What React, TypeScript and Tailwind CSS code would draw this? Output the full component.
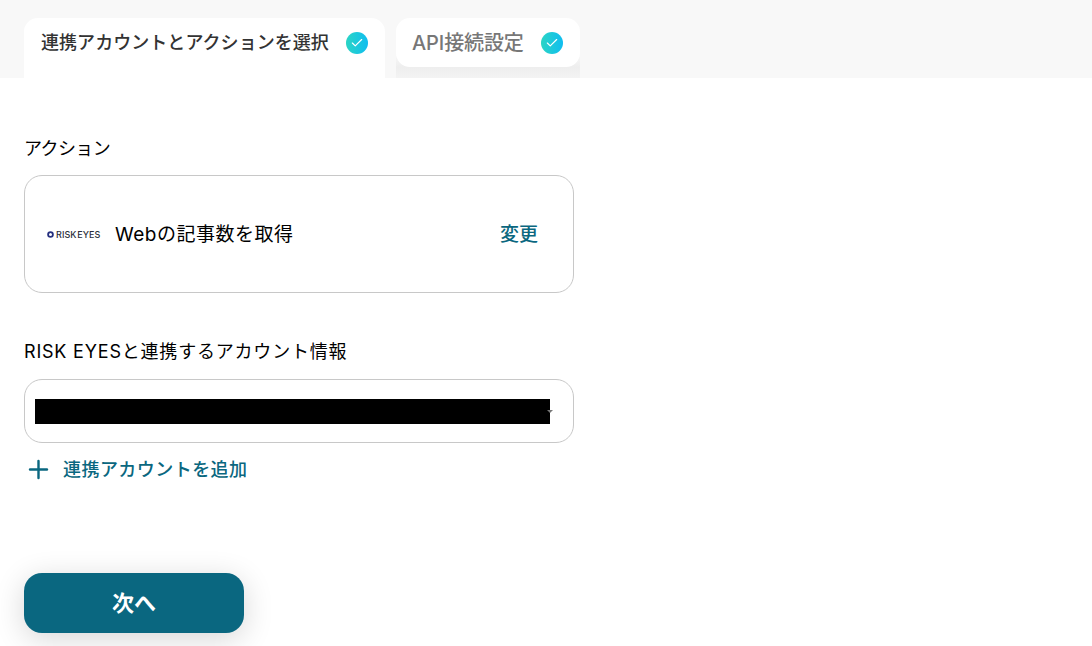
import { Check, Plus } from 'lucide-react'

const FONT = { fontFamily: 'Inter, "Noto Sans CJK JP", sans-serif' }

function CheckBadge() {
  return (
    <span className="flex h-[22px] w-[22px] shrink-0 items-center justify-center rounded-full bg-gradient-to-r from-[#2bd4c4] to-[#10bdf0]">
      <Check size={14} strokeWidth={2} className="text-white" />
    </span>
  )
}

function RiskEyesLogo() {
  return (
    <div className="flex w-[56px] shrink-0 items-center gap-[2px]">
      <svg width="7" height="7" viewBox="0 0 7 7" className="shrink-0">
        <circle cx="3.5" cy="3.5" r="2.4" fill="none" stroke="#26307f" strokeWidth="1.8" />
      </svg>
      <span className="whitespace-nowrap text-[9px] font-medium leading-none tracking-[0.01em] text-[#2b2f3c] [word-spacing:-2px]">RISK EYES</span>
    </div>
  )
}

export default function App() {
  return (
    <div className="h-[646px] w-[1092px] overflow-hidden bg-white text-black" style={FONT}>
      {/* Tabs */}
      <div className="flex h-[78px] items-start gap-[11px] bg-[#f8f8f8] pl-6 pt-[18px]">
        <div className="flex h-[60px] w-[361px] items-start gap-[17px] rounded-t-[14px] bg-white pl-[17px] pt-[14px]">
          <span className="text-[18px] font-medium leading-[22px] tracking-[0.05px] text-[#333]">連携アカウントとアクションを選択</span>
          <CheckBadge />
        </div>
        <div className="h-[60px] overflow-hidden bg-gradient-to-b from-[#f8f8f8] from-60% via-[#eeeeee] via-82% to-[#f3f3f3]">
          <div className="flex h-[49px] w-[184px] items-start gap-[17px] rounded-[14px] bg-white pl-4 pt-[14px]">
            <span className="text-[20px] font-medium leading-[22px] tracking-[-0.1px] text-[#777]">API接続設定</span>
            <CheckBadge />
          </div>
        </div>
      </div>

      <div className="ml-6 w-[550px]">
        <div className="mt-[59px] text-[18px] font-normal leading-6 tracking-[-0.6px]">アクション</div>
        <div className="mt-[14px] flex h-[118px] items-center rounded-[18px] border border-[#c8c8c8] pl-[22px] pr-[35px]">
          <RiskEyesLogo />
          <span className="ml-3 text-[19px] leading-[29px] tracking-[0.5px]">Webの記事数を取得</span>
          <span className="ml-auto text-[19px] font-medium leading-[29px] text-[#0a6780]">変更</span>
        </div>

        <div className="mt-[47px] text-[18px] font-normal leading-6 tracking-[0.8px]">RISK EYESと連携するアカウント情報</div>
        <div className="mt-[15px] flex h-16 items-center rounded-[18px] border border-[#c8c8c8] pl-[10px]">
          <div className="h-[25px] w-[515px] bg-black" />
          <span className="ml-[-3px] h-0 w-0 border-x-[3px] border-t-[3px] border-x-transparent border-t-[#777]" />
        </div>
        <div className="mt-[12px] flex items-center text-[#0a6780]">
          <Plus size={29} strokeWidth={2} />
          <span className="ml-[10px] text-[18px] font-medium leading-6 tracking-[0.45px]">連携アカウントを追加</span>
        </div>

        <button className="mt-[89px] block h-[60px] w-[220px] rounded-[18px] bg-[#0a6780] text-[22px] font-bold text-white shadow-[0_6px_30px_rgba(0,0,0,0.16)]">
          次へ
        </button>
      </div>
    </div>
  )
}
